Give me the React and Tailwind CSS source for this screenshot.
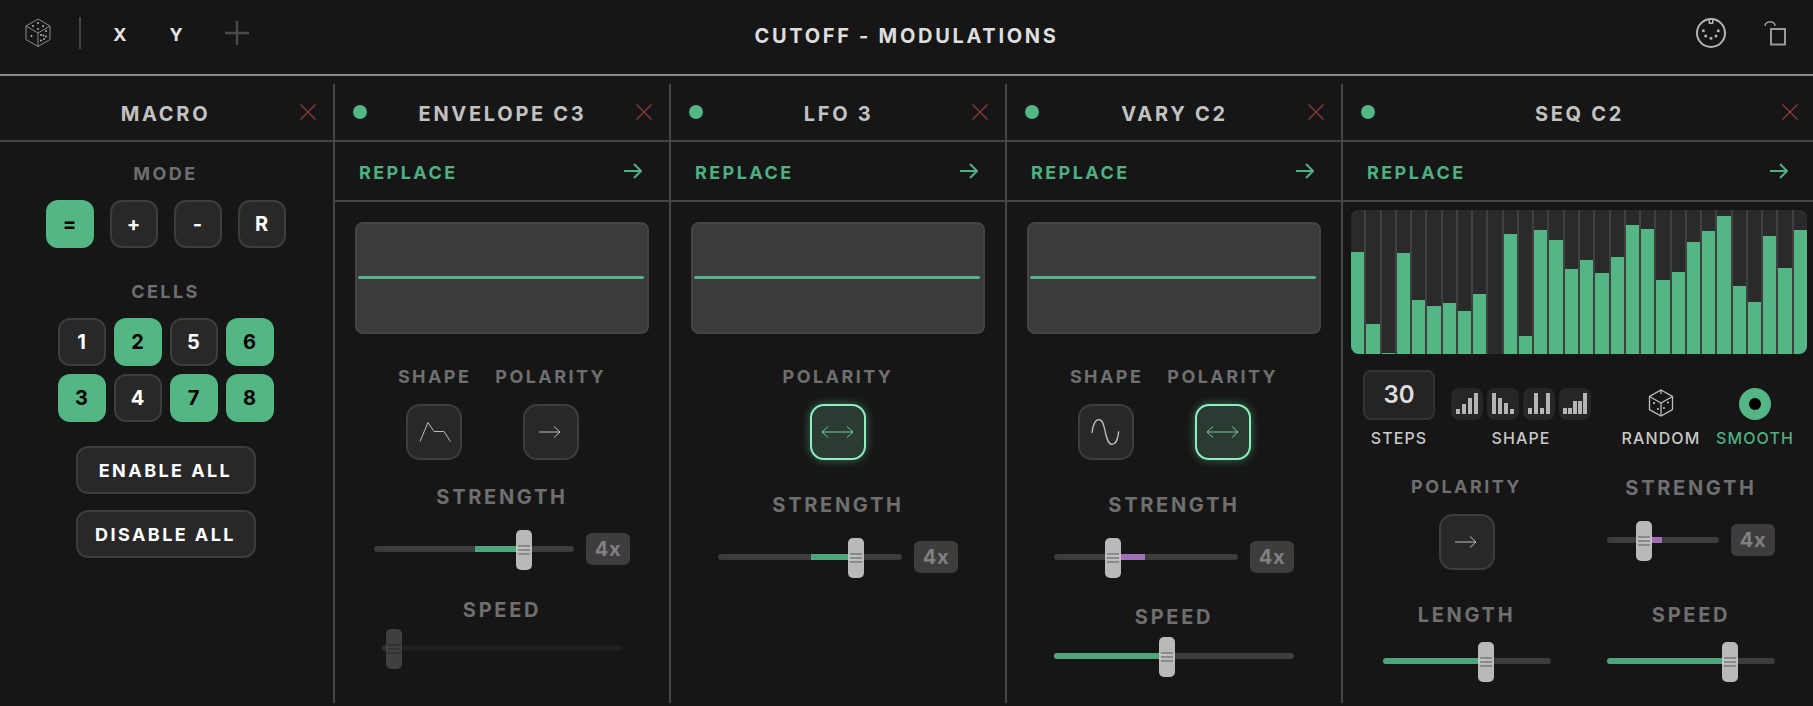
import React from 'react';

const font = { fontFamily: 'Inter, "Liberation Sans", sans-serif' };

const seqBars = [102, 30, 1, 101, 54, 48, 51, 43, 60, 0, 120, 18, 124, 114, 85, 94, 81, 97, 129, 125, 74, 82, 112, 123, 138, 68, 52, 118, 86, 124];

const shapeBars = [
    [5, 10, 16, 21],
    [21, 16, 11, 5],
    [6, 21, 6, 21],
    [6, 6, 13, 13, 21],
];

const Label = ({ children, className = '' }) => (
    <div className={`h-5 text-[18px] leading-5 font-bold tracking-[0.135em] text-[#6f6f6f] whitespace-nowrap ${className}`}>{children}</div>
);

const BigLabel = ({ children, className = '' }) => (
    <div className={`h-6 text-[20px] leading-6 font-bold tracking-[0.135em] text-[#6f6f6f] whitespace-nowrap ${className}`}>{children}</div>
);

const SmallLabel = ({ children, green }) => (
    <div className={`mt-2 h-5 text-[16px] leading-5 font-medium tracking-[0.07em] whitespace-nowrap ${green ? 'text-[#4fb081]' : 'text-[#c9c9c9]'}`}>{children}</div>
);

const CloseIcon = () => (
    <svg width="16" height="16" viewBox="0 0 16 16" className="justify-self-end">
        <path d="M0.5 0.5 L15.5 15.5 M15.5 0.5 L0.5 15.5" stroke="#8e3d3d" strokeWidth="1.2" fill="none" />
    </svg>
);

const ArrowRight = () => (
    <svg width="18" height="16" viewBox="0 0 18 16" fill="none">
        <path d="M0 8 H17 M10 1 L17 8 L10 15" stroke="#4fb081" strokeWidth="2" />
    </svg>
);

const ThinArrow = () => (
    <svg width="52" height="52" viewBox="2 2 52 52" fill="none">
        <path d="M16 28 H37 M31 22.5 L37 28 L31 33.5" stroke="#bdbdbd" strokeWidth="1" />
    </svg>
);

const BothArrow = () => (
    <svg width="52" height="52" viewBox="2 2 52 52" fill="none">
        <path d="M12 28 H43 M18 22.5 L12 28 L18 33.5 M37 22.5 L43 28 L37 33.5" stroke="#74cc9f" strokeWidth="1" />
    </svg>
);

const EnvelopeIcon = () => (
    <svg width="52" height="52" viewBox="2 2 52 52" fill="none">
        <path d="M14 37.5 L22 18.5 L28 27.5 L38 27.5 L44.5 37.5" stroke="#bdbdbd" strokeWidth="1" />
    </svg>
);

const SineIcon = () => (
    <svg width="52" height="52" viewBox="2 2 52 52" fill="none">
        <path d="M14 29 C15 20 18 15.7 21 15.7 C25 15.7 26 22 27.3 28 C28.6 34 30 40.3 34 40.3 C37 40.3 40 36 40.7 27.3" stroke="#c4c4c4" strokeWidth="1.2" />
    </svg>
);

const DiceTop = () => (
    <svg width="28" height="30" viewBox="0 0 28 30" fill="none">
        <path d="M14 1 L26 8 V21.5 L14 28.5 L2 21.5 V8 Z M2 8 L14 15 L26 8 M14 15 V28.5" stroke="#8a8a8a" strokeWidth="1" />
        <g fill="#b0b0b0">
            <circle cx="14" cy="5" r="1" />
            <circle cx="9" cy="8" r="1" />
            <circle cx="19" cy="8" r="1" />
            <circle cx="14" cy="11" r="1" />
            <circle cx="7.5" cy="18" r="1" />
            <circle cx="22" cy="13" r="1" />
            <circle cx="22" cy="18.5" r="1" />
            <circle cx="17" cy="17" r="1" />
            <circle cx="19.5" cy="17.5" r="1" />
            <circle cx="17" cy="22.5" r="1" />
            <circle cx="20" cy="21" r="1" />
        </g>
    </svg>
);

const DiceSmall = () => (
    <svg width="26" height="28" viewBox="0 0 26 28" fill="none">
        <path d="M13 1 L24.5 7.5 V20.5 L13 27 L1.5 20.5 V7.5 Z M1.5 7.5 L13 14 L24.5 7.5 M13 1 V5 M13 14 V27" stroke="#bdbdbd" strokeWidth="1.3" />
        <g fill="#c8c8c8">
            <circle cx="6" cy="14" r="1" />
            <circle cx="10" cy="20" r="1" />
            <circle cx="20" cy="13.5" r="1" />
            <circle cx="16" cy="19" r="1" />
        </g>
    </svg>
);

const MidiIcon = () => (
    <svg width="32" height="32" viewBox="0 0 32 32" fill="none">
        <circle cx="16" cy="16" r="14" stroke="#b5b5b5" strokeWidth="2" />
        <rect x="13.5" y="2" width="5" height="5" rx="1" fill="#b5b5b5" />
        <rect x="15" y="3" width="2" height="2.5" fill="#161616" />
        <g fill="#b5b5b5">
            <circle cx="8.4" cy="13.7" r="1.5" />
            <circle cx="10.7" cy="19" r="1.5" />
            <circle cx="16" cy="21.3" r="1.5" />
            <circle cx="21" cy="19" r="1.5" />
            <circle cx="23.3" cy="13.7" r="1.5" />
        </g>
    </svg>
);

const LockIcon = () => (
    <svg width="22" height="26" viewBox="0 0 22 26" fill="none">
        <rect x="7" y="9" width="14" height="15.5" stroke="#999999" strokeWidth="2" />
        <path d="M1 6 C1 0.5 11 0.5 11 6" stroke="#b0b0b0" strokeWidth="1.3" />
    </svg>
);

const ModeButton = ({ on, children }) => (
    <div className={`w-12 h-12 rounded-xl flex items-center justify-center text-[20px] font-bold ${on ? 'bg-[#54b585] text-black' : 'bg-[#282828] border-2 border-[#3d3d3d] text-white'}`}>{children}</div>
);

const IconButton = ({ active, children }) => (
    <div className={`w-14 h-14 rounded-[14px] border-2 flex items-center justify-center ${active ? 'bg-[#2b3a33] border-[#8df0bf] shadow-[0_0_10px_rgba(120,240,180,0.4)]' : 'bg-[#282828] border-[#3d3d3d]'}`}>{children}</div>
);

const WaveBox = () => (
    <div className="mt-5 w-[294px] h-28 rounded-lg bg-[#3a3b3a] border-2 border-[#444444] flex items-center pl-px pr-[3px] pb-[2px]">
        <div className="w-full h-[3px] rounded-full bg-[#54b585]"></div>
    </div>
);

// thumb = centre of the handle, from/to = coloured part, all in px from the track's left
const Slider = ({ width, thumb, from, to, color = 'green', dim, badge }) => (
    <div className={`flex items-center gap-3 h-10 -mt-px mb-px ${dim ? 'opacity-25' : ''}`}>
        <div className="relative h-[6px] rounded-full bg-[#3c3c3c]" style={{ width }}>
            <div
                className={`absolute top-0 h-[6px] ${from === 0 ? 'rounded-l-full' : ''} ${color === 'green' ? 'bg-[#4ea57b]' : 'bg-[#a06fb8]'}`}
                style={{ left: from, width: to - from }}
            ></div>
            <div
                className="absolute top-[-16px] w-4 h-10 rounded-[5px] bg-[#cbcbcb]/90 flex flex-col items-center justify-center gap-[2px]"
                style={{ left: thumb - 8 }}
            >
                <div className="w-3 h-[2px] bg-[#8a8a8a]"></div>
                <div className="w-3 h-[2px] bg-[#8a8a8a]"></div>
                <div className="w-3 h-[2px] bg-[#8a8a8a]"></div>
            </div>
        </div>
        {badge && <div className="w-11 h-8 rounded-md bg-[#3d3d3d] text-[#808080] text-[20px] font-bold flex items-center justify-center tracking-[0.03em]">4x</div>}
    </div>
);

const Column = ({ title, dot, last, first, className = '', children }) => (
    <div className={`h-full flex flex-col ${last ? 'flex-1' : 'shrink-0 border-r-2 border-[#444444]'} ${first ? 'w-[335px]' : ''} ${!first && !last ? 'w-[336px]' : ''} ${className}`}>
        <div className={`h-[58px] shrink-0 border-b-2 border-[#444444] grid grid-cols-[1fr_auto_1fr] items-center ${first ? 'pl-[15px]' : 'pl-[18px]'} ${last ? 'pr-[15px]' : 'pr-[17px]'}`}>
            <div>{dot && <div className="w-[14px] h-[14px] rounded-full bg-[#54b585]"></div>}</div>
            <div className="pt-[3px] text-[20px] font-bold tracking-[0.135em] text-[#c2c2c2] whitespace-nowrap">{title}</div>
            <CloseIcon />
        </div>
        {children}
    </div>
);

const ReplaceRow = ({ last }) => (
    <div className={`h-[60px] shrink-0 border-b-2 border-[#444444] flex items-center justify-between pl-6 ${last ? 'pr-[25px]' : 'pr-[27px]'}`}>
        <span className="pt-[2px] text-[18px] font-bold tracking-[0.135em] text-[#4fb081]">REPLACE</span>
        <ArrowRight />
    </div>
);

const App = () => {
    return (
        <div className="w-[1813px] h-[706px] bg-[#161616] overflow-hidden flex flex-col" style={font}>
            <div className="h-[76px] shrink-0 border-b-2 border-[#8a8a8a] grid grid-cols-[1fr_auto_1fr] items-center pb-[8px]">
                <div className="flex items-center pl-6">
                    <DiceTop />
                    <div className="ml-[27px] w-[2px] h-8 bg-[#444444]"></div>
                    <div className="ml-8 pt-[2px] w-[14px] text-center text-[18px] font-bold text-[#e4e4e4]">X</div>
                    <div className="ml-[42px] pt-[2px] w-[14px] text-center text-[18px] font-bold text-[#e4e4e4]">Y</div>
                    <svg width="24" height="24" viewBox="0 0 24 24" className="ml-[42px]">
                        <path d="M12 0 V24 M0 12 H24" stroke="#4a4a4a" strokeWidth="2.5" />
                    </svg>
                </div>
                <div className="pt-[6px] text-[20px] font-bold tracking-[0.135em] text-[#dedede] whitespace-nowrap">CUTOFF - MODULATIONS</div>
                <div className="flex items-center justify-end pr-[27px] gap-[37px]">
                    <MidiIcon />
                    <LockIcon />
                </div>
            </div>

            <div className="flex-1 flex pt-2 pb-[3px] min-h-0">
                <Column title="MACRO" first>
                    <div className="flex flex-col items-center pr-[2px]">
                        <Label className="mt-[22px]">MODE</Label>
                        <div className="mt-4 flex gap-4">
                            <ModeButton on>=</ModeButton>
                            <ModeButton>+</ModeButton>
                            <ModeButton>-</ModeButton>
                            <ModeButton>R</ModeButton>
                        </div>
                        <Label className="mt-[34px]">CELLS</Label>
                        <div className="mt-4 grid grid-cols-4 gap-2">
                            <ModeButton>1</ModeButton>
                            <ModeButton on>2</ModeButton>
                            <ModeButton>5</ModeButton>
                            <ModeButton on>6</ModeButton>
                            <ModeButton on>3</ModeButton>
                            <ModeButton>4</ModeButton>
                            <ModeButton on>7</ModeButton>
                            <ModeButton on>8</ModeButton>
                        </div>
                        <div className="mt-6 w-[180px] h-12 rounded-xl bg-[#282828] border-2 border-[#3d3d3d] flex items-center justify-center text-[18px] font-bold tracking-[0.135em] text-white">ENABLE ALL</div>
                        <div className="mt-4 w-[180px] h-12 rounded-xl bg-[#282828] border-2 border-[#3d3d3d] flex items-center justify-center text-[18px] font-bold tracking-[0.135em] text-white">DISABLE ALL</div>
                    </div>
                </Column>

                <Column title="ENVELOPE C3" dot>
                    <ReplaceRow />
                    <div className="flex flex-col items-center">
                        <WaveBox />
                        <div className="mt-[33px] flex gap-6">
                            <div className="flex flex-col items-center">
                                <Label>SHAPE</Label>
                                <div className="mt-[17px] mr-[2px]"><IconButton><EnvelopeIcon /></IconButton></div>
                            </div>
                            <div className="flex flex-col items-center">
                                <Label>POLARITY</Label>
                                <div className="mt-[17px]"><IconButton><ThinArrow /></IconButton></div>
                            </div>
                        </div>
                        <BigLabel className="mt-[25px]">STRENGTH</BigLabel>
                        <div className="mt-[21px]"><Slider width={200} thumb={150} from={101} to={150} badge /></div>
                        <BigLabel className="mt-7">SPEED</BigLabel>
                        <div className="mt-[7px]"><Slider width={240} thumb={12} from={0} to={12} dim /></div>
                    </div>
                </Column>

                <Column title="LFO 3" dot>
                    <ReplaceRow />
                    <div className="flex flex-col items-center">
                        <WaveBox />
                        <Label className="mt-[33px]">POLARITY</Label>
                        <div className="mt-[17px]"><IconButton active><BothArrow /></IconButton></div>
                        <BigLabel className="mt-[33px]">STRENGTH</BigLabel>
                        <div className="mt-[21px]"><Slider width={184} thumb={138} from={93} to={138} badge /></div>
                    </div>
                </Column>

                <Column title="VARY C2" dot>
                    <ReplaceRow />
                    <div className="flex flex-col items-center">
                        <WaveBox />
                        <div className="mt-[33px] flex gap-6">
                            <div className="flex flex-col items-center">
                                <Label>SHAPE</Label>
                                <div className="mt-[17px] mr-[2px]"><IconButton><SineIcon /></IconButton></div>
                            </div>
                            <div className="flex flex-col items-center">
                                <Label>POLARITY</Label>
                                <div className="mt-[17px]"><IconButton active><BothArrow /></IconButton></div>
                            </div>
                        </div>
                        <BigLabel className="mt-[33px]">STRENGTH</BigLabel>
                        <div className="mt-[21px]"><Slider width={184} thumb={59} from={59} to={91} color="purple" badge /></div>
                        <BigLabel className="mt-[27px]">SPEED</BigLabel>
                        <div className="mt-2"><Slider width={240} thumb={113} from={0} to={113} /></div>
                    </div>
                </Column>

                <Column title="SEQ C2" dot last>
                    <ReplaceRow last />
                    <div className="mt-2 ml-2 mr-[6px] h-36 shrink-0 rounded-lg overflow-hidden bg-[#404040] grid grid-cols-[repeat(30,1fr)] gap-x-[2px]">
                        {seqBars.map((h, i) => (
                            <div key={i} className="bg-[#2a2a2a] flex items-end">
                                <div className="w-full bg-[#54b585]" style={{ height: h }}></div>
                            </div>
                        ))}
                    </div>
                    <div className="mt-4 pl-5 flex">
                        <div className="w-[72px] flex flex-col items-center">
                            <div className="w-[72px] h-[50px] rounded-lg bg-[#242424] border-2 border-[#333333] flex items-center justify-center text-[24px] font-semibold text-[#dedede]">30</div>
                            <SmallLabel>STEPS</SmallLabel>
                        </div>
                        <div className="ml-4 w-[140px] flex flex-col items-center">
                            <div className="h-[50px] flex items-end gap-1">
                                {shapeBars.map((bars, i) => (
                                    <div key={i} className={`w-8 h-8 rounded-lg bg-[#262626] flex items-end justify-center pb-[6px] ${bars.length > 4 ? 'gap-px' : 'gap-[2px]'}`}>
                                        {bars.map((h, j) => (
                                            <div key={j} className="w-1 bg-[#b5b5b5]" style={{ height: h }}></div>
                                        ))}
                                    </div>
                                ))}
                            </div>
                            <SmallLabel>SHAPE</SmallLabel>
                        </div>
                        <div className="ml-6 w-[92px] flex flex-col items-center">
                            <div className="h-[50px] flex items-end pb-[3px]"><DiceSmall /></div>
                            <SmallLabel>RANDOM</SmallLabel>
                        </div>
                        <div className="ml-[2px] w-[92px] flex flex-col items-center">
                            <div className="h-[50px] flex items-end">
                                <div className="w-8 h-8 rounded-full bg-[#54b585] flex items-center justify-center">
                                    <div className="w-3 h-3 rounded-full bg-black"></div>
                                </div>
                            </div>
                            <SmallLabel green>SMOOTH</SmallLabel>
                        </div>
                    </div>
                    <div className="mt-7 flex">
                        <div className="w-[247px] flex flex-col items-center">
                            <Label className="mt-px">POLARITY</Label>
                            <div className="mt-[17px]"><IconButton><ThinArrow /></IconButton></div>
                            <BigLabel className="mt-[33px]">LENGTH</BigLabel>
                            <div className="mt-[15px]"><Slider width={168} thumb={103} from={0} to={103} /></div>
                        </div>
                        <div className="w-[202px] flex flex-col items-center">
                            <BigLabel>STRENGTH</BigLabel>
                            <div className="mt-[21px]"><Slider width={112} thumb={37} from={37} to={55} color="purple" badge /></div>
                            <BigLabel className="mt-[42px]">SPEED</BigLabel>
                            <div className="mt-[15px]"><Slider width={168} thumb={123} from={0} to={123} /></div>
                        </div>
                    </div>
                </Column>
            </div>
        </div>
    );
};

export default App;
